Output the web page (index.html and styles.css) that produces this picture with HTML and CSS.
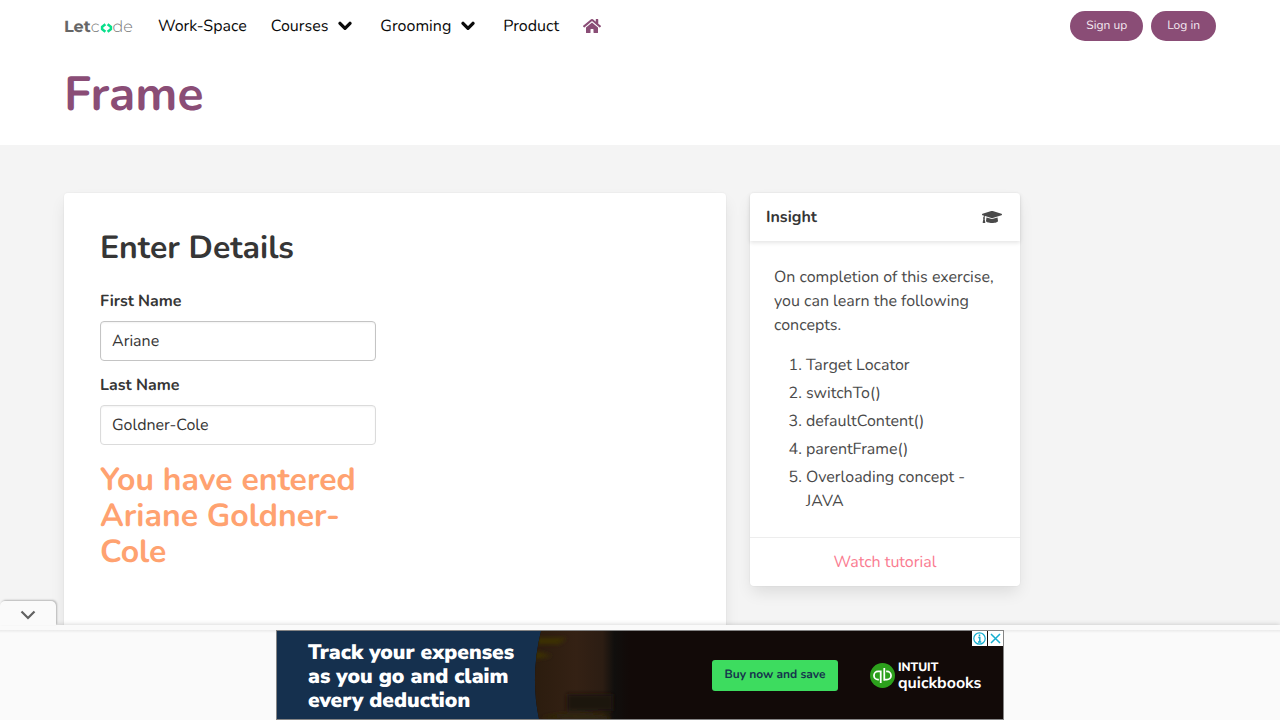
FILE: index.html
```html
<!DOCTYPE html>
<html lang="en">
<head>
<meta charset="utf-8">
<meta name="viewport" content="width=device-width, initial-scale=1">
<title>Frame</title>
<link rel="stylesheet" href="styles.css">
</head>
<body>
<header class="hero">
  <nav class="navbar" aria-label="Main">
    <a class="logo" href="#" aria-label="Letcode"><b>Let</b><span>c</span><svg class="logo-mark" viewBox="0 0 14 12" aria-hidden="true"><path d="M5.800 2 2.300 4.700v2.600L5.800 10M8.200 2l3.500 2.700v2.600L8.200 10" fill="none" stroke="#08df8b" stroke-width="2.800"/></svg><span>de</span></a>
    <div class="nav-links">
      <a href="#">Work-Space</a>
      <a class="has-menu" href="#">Courses <svg class="chevron" viewBox="0 0 14 10" aria-hidden="true"><path d="M2 2.3 7 7.3l5-5" fill="none" stroke="currentColor" stroke-width="3.3" stroke-linecap="round" stroke-linejoin="round"/></svg></a>
      <a class="has-menu" href="#">Grooming <svg class="chevron" viewBox="0 0 14 10" aria-hidden="true"><path d="M2 2.3 7 7.3l5-5" fill="none" stroke="currentColor" stroke-width="3.3" stroke-linecap="round" stroke-linejoin="round"/></svg></a>
      <a href="#">Product</a>
      <a href="#" aria-label="Home"><svg class="home" viewBox="0 0 576 512" aria-hidden="true"><path fill="currentColor" d="M280.400 148.300L96 300.100V464a16 16 0 0 0 16 16l112-.3a16 16 0 0 0 16-16V368a16 16 0 0 1 16-16h64a16 16 0 0 1 16 16v95.600a16 16 0 0 0 16 16.100l112 .3a16 16 0 0 0 16-16V300L295.700 148.300a12.200 12.200 0 0 0-15.300 0zM571.600 251.500L488 182.600V44.100a12 12 0 0 0-12-12h-56a12 12 0 0 0-12 12v72.600L318.500 43a48 48 0 0 0-61 0L4.300 251.500a12 12 0 0 0-1.600 16.900l25.500 31A12 12 0 0 0 45.200 301l235.200-193.700a12.200 12.200 0 0 1 15.300 0L530.900 301a12 12 0 0 0 16.900-1.600l25.500-31a12 12 0 0 0-1.700-16.900z"/></svg></a>
    </div>
    <div class="nav-actions">
      <button class="pill" type="button">Sign up</button>
      <button class="pill" type="button">Log in</button>
    </div>
  </nav>
  <h1 class="page-title">Frame</h1>
</header>
<main class="section">
  <div class="columns">
    <section class="card form-card">
      <h2 class="form-title">Enter Details</h2>
      <form class="details">
        <label class="label" for="first">First Name</label>
        <input class="input is-hovered" id="first" type="text" value="Ariane">
        <label class="label" for="last">Last Name</label>
        <input class="input" id="last" type="text" value="Goldner-Cole">
        <p class="result">You have entered Ariane Goldner-Cole</p>
      </form>
    </section>
    <aside class="card insight">
      <header class="card-header">
        <h2 class="card-title">Insight</h2>
        <svg class="cap" viewBox="0 0 640 512" aria-hidden="true"><path fill="currentColor" d="M622.300 153.200L343 67.500c-15-4.600-31-4.600-46.100 0L17.700 153.200c-23.600 7.200-23.600 38.400 0 45.600l48.700 15c-10.700 13.200-17.200 29.200-17.900 46.900C38.900 266.200 32 276.200 32 288c0 10.800 5.700 19.900 14 25.600L20.300 428.500C18.100 438.500 25.700 448 35.900 448h56.200c10.200 0 17.900-9.500 15.600-19.500L82 313.600c8.300-5.700 14-14.800 14-25.600 0-11.500-6.500-21.200-15.700-26.800.8-15 8.500-28.200 20.500-36.800l196.100 60.200c9 2.700 26.200 6.300 46.100 0l279.300-85.700c23.600-7.300 23.600-38.500 0-45.700zM352.500 315.200c-31.900 9.800-56.700 2.900-65 0l-144.100-44.300L128 384c0 35.300 86 64 192 64s192-28.700 192-64l-15.400-113.100z"/></svg>
      </header>
      <div class="card-content">
        <p>On completion of this exercise, you can learn the following concepts.</p>
        <ol>
          <li>Target Locator</li>
          <li>switchTo()</li>
          <li>defaultContent()</li>
          <li>parentFrame()</li>
          <li>Overloading concept - JAVA</li>
        </ol>
      </div>
      <footer class="card-footer"><a href="#">Watch tutorial</a></footer>
    </aside>
  </div>
</main>
<div class="ad-bar">
  <button class="collapse" type="button" aria-label="Collapse">
    <svg viewBox="0 0 16 10" aria-hidden="true"><path d="m1.500 1.500 6.500 6.500 6.500-6.500" fill="none" stroke="#616161" stroke-width="2.200"/></svg>
  </button>
  <div class="ad">
    <svg class="ad-art" viewBox="0 0 726 88" preserveAspectRatio="xMinYMid slice" aria-hidden="true">
      <defs>
        <linearGradient id="wood" x1="0" x2="1" y1="0" y2="0"><stop offset="0" stop-color="#2b1c0e"/><stop offset=".45" stop-color="#342114"/><stop offset=".72" stop-color="#2c1d13"/><stop offset=".84" stop-color="#110f0d"/><stop offset="1" stop-color="#120a08"/></linearGradient>
        <filter id="soft"><feGaussianBlur stdDeviation="2"/></filter>
        <clipPath id="photo"><path d="M264 0Q253 45 262 88H726V0z"/></clipPath>
      </defs>
      <path fill="#15304e" d="M0 0h270v88H0z"/>
      <g clip-path="url(#photo)">
        <path fill="#120a08" d="M255 0h471v88H255z"/>
        <path fill="url(#wood)" d="M255 0h98v88h-98z"/>
        <g filter="url(#soft)">
          <path fill="#3c3204" d="M260 7h30l-8 6h-22zM258 20l17 5-17 3z"/>
          <path fill="#1c120e" d="M290 63h46v17h-46z"/>
          <path fill="#2e250c" d="M263 87q30-9 70-1v3z"/>
        </g>
      </g>
    </svg>
    <p class="ad-copy">Track your expenses<br>as you go and claim<br>every deduction</p>
    <button class="ad-cta" type="button">Buy now and save</button>
    <div class="brand">
      <svg class="qb" viewBox="0 0 24 24" aria-hidden="true"><circle cx="12" cy="12" r="12" fill="#2ca01c"/><path d="M10.300 8H7.800a4 4 0 0 0 0 8h.7M10.300 7.200v12M13.700 16h2.500a4 4 0 0 0 0-8h-.7M13.700 4.800V17" fill="none" stroke="#fff" stroke-width="1.700"/></svg>
      <div class="brand-text"><span class="intuit">INTUIT</span><span class="quickbooks">quickbooks</span></div>
    </div>
    <div class="ad-controls">
      <button type="button" aria-label="Ad information"><svg viewBox="0 0 15 15" aria-hidden="true"><circle cx="7.500" cy="7.500" r="5.700" fill="none" stroke="#15aed0" stroke-width="1.200"/><path d="M6.300 6.500h1.500V11M6 11h3.300M7.500 3.500v1.700" fill="none" stroke="#15aed0" stroke-width="1.500"/></svg></button>
      <button type="button" aria-label="Close ad"><svg viewBox="0 0 15 15" aria-hidden="true"><path d="m3 3 9 9m0-9-9 9" fill="none" stroke="#15aed0" stroke-width="1.500"/></svg></button>
    </div>
  </div>
</div>
</body>
</html>
```

FILE: styles.css
```css
* { box-sizing: border-box; }
body {
  margin: 0;
  min-height: 100vh;
  display: flex;
  flex-direction: column;
  background: #f4f4f4;
  color: #4a4a4a;
  font: 16px/24px Nunito, Lato, sans-serif;
  text-rendering: geometricPrecision;
}
h1, h2, p { margin: 0; }
a { color: inherit; text-decoration: none; }
button, input { font: inherit; text-rendering: inherit; }
button { cursor: pointer; border: 0; }
svg { display: block; flex: none; }

.hero { background: #fff; padding: 0 64px 24px; }
.navbar { display: flex; align-items: center; height: 52px; color: #0a0a0a; }
.logo {
  display: flex;
  align-items: center;
  width: 82px;
  padding-top: 4px;
  color: #666;
  font: 16px/24px Montserrat, "Open Sans", sans-serif;
}
.logo span { color: #777; font-weight: 300; }
.logo-mark { width: 13px; height: 12px; }
.nav-links { display: flex; gap: 24px; padding-left: 12px; }
.nav-links a { display: flex; align-items: center; gap: 10px; }
.nav-links .has-menu { padding-right: 4px; }
.chevron { width: 14px; height: 10px; }
.home { width: 18px; height: 16px; color: #8a4d76; }
.nav-actions { display: flex; gap: 8px; margin-left: auto; }
.pill {
  height: 30px;
  padding: 0 16px;
  border-radius: 15px;
  background: #8a4d76;
  color: #f5e9f1;
  font-size: 12px;
}
.page-title {
  padding-top: 15px;
  color: #8a4d76;
  font-size: 48px;
  line-height: 54px;
  font-weight: 700;
}

.section { flex: 1; display: flex; padding: 48px 64px 0; }
.columns {
  flex: 1;
  display: grid;
  grid-template-columns: calc(58.33% - 24px) calc(25% - 24px);
  column-gap: 24px;
  margin-right: -24px;
}
.card {
  background: #fff;
  border-radius: 4px;
  box-shadow: 0 8px 16px -2px rgba(10, 10, 10, .1), 0 0 0 1px rgba(10, 10, 10, .02);
}
.form-card { padding: 36px; }
.form-title { color: #363636; font-size: 32px; line-height: 39px; font-weight: 700; }
.details { max-width: 276px; padding-top: 21px; }
.label { display: block; margin-bottom: 8px; color: #363636; font-weight: 700; }
.input {
  display: block;
  width: 100%;
  height: 40px;
  margin-bottom: 12px;
  padding: 0 11px;
  border: 1px solid #dbdbdb;
  border-radius: 4px;
  background: #fff;
  color: #363636;
  box-shadow: inset 0 1px 2px rgba(10, 10, 10, .05);
}
.is-hovered { border-color: #c4c4c4; }
.result { padding-top: 6px; color: #ffa270; font-size: 32px; line-height: 36px; font-weight: 700; }

.insight { align-self: start; }
.card-header {
  display: flex;
  align-items: center;
  justify-content: space-between;
  padding: 12px 18px 12px 16px;
  box-shadow: 0 2px 4px rgba(10, 10, 10, .1);
}
.card-title { color: #363636; font-size: 16px; line-height: 24px; font-weight: 700; }
.cap { width: 20px; height: 16px; }
.card-content { padding: 24px; }
.card-content ol { margin: 16px 0 0; padding-left: 32px; }
.card-content li + li { margin-top: 4px; }
.card-footer { border-top: 1px solid #ededed; padding: 12px; text-align: center; color: #fa7c91; }

.ad-bar {
  position: fixed;
  right: 0;
  bottom: 0;
  left: 0;
  display: flex;
  justify-content: center;
  padding-top: 5px;
  background: linear-gradient(#fafafa 5px, #eaeaea 5px, #fafafa 8px);
  box-shadow: 0 0 5px rgba(0, 0, 0, .2);
}
.collapse {
  position: absolute;
  bottom: 100%;
  left: 0;
  display: grid;
  place-items: center;
  width: 56px;
  height: 24px;
  padding: 4px 0 0;
  border-radius: 5px 5px 0 0;
  background: #fafafa;
  box-shadow: 1px -1px 2px rgba(0, 0, 0, .25);
}
.collapse svg { width: 16px; height: 10px; }
.ad {
  position: relative;
  display: flex;
  align-items: center;
  width: 728px;
  height: 90px;
  padding: 0 25px 0 31px;
  border: 1px solid #858585;
  background: #120a08;
  font-family: "Nunito Sans", Lato, sans-serif;
}
.ad-art { position: absolute; inset: 0; width: 100%; height: 100%; }
.ad-copy {
  position: relative;
  flex: 1;
  padding-top: 4px;
  color: #fff;
  font-size: 21px;
  line-height: 24px;
  font-weight: 900;
}
.ad-cta {
  position: relative;
  width: 126px;
  height: 31px;
  margin-right: 32px;
  padding: 0;
  border-radius: 3px;
  background: #3ddc5f;
  color: #16354d;
  font-size: 12px;
  font-weight: 700;
}
.brand { position: relative; display: flex; align-items: center; gap: 3px; color: #fff; }
.qb { width: 25px; height: 25px; }
.brand-text { display: flex; flex-direction: column; width: 80px; }
.intuit { font-size: 12px; line-height: 16px; font-weight: 800; }
.quickbooks { font-size: 16px; line-height: 14px; font-weight: 700; }
.ad-controls { position: absolute; top: 0; right: 0; display: flex; gap: 1px; }
.ad-controls button { width: 15px; height: 15px; padding: 0; background: #fff; }
```
